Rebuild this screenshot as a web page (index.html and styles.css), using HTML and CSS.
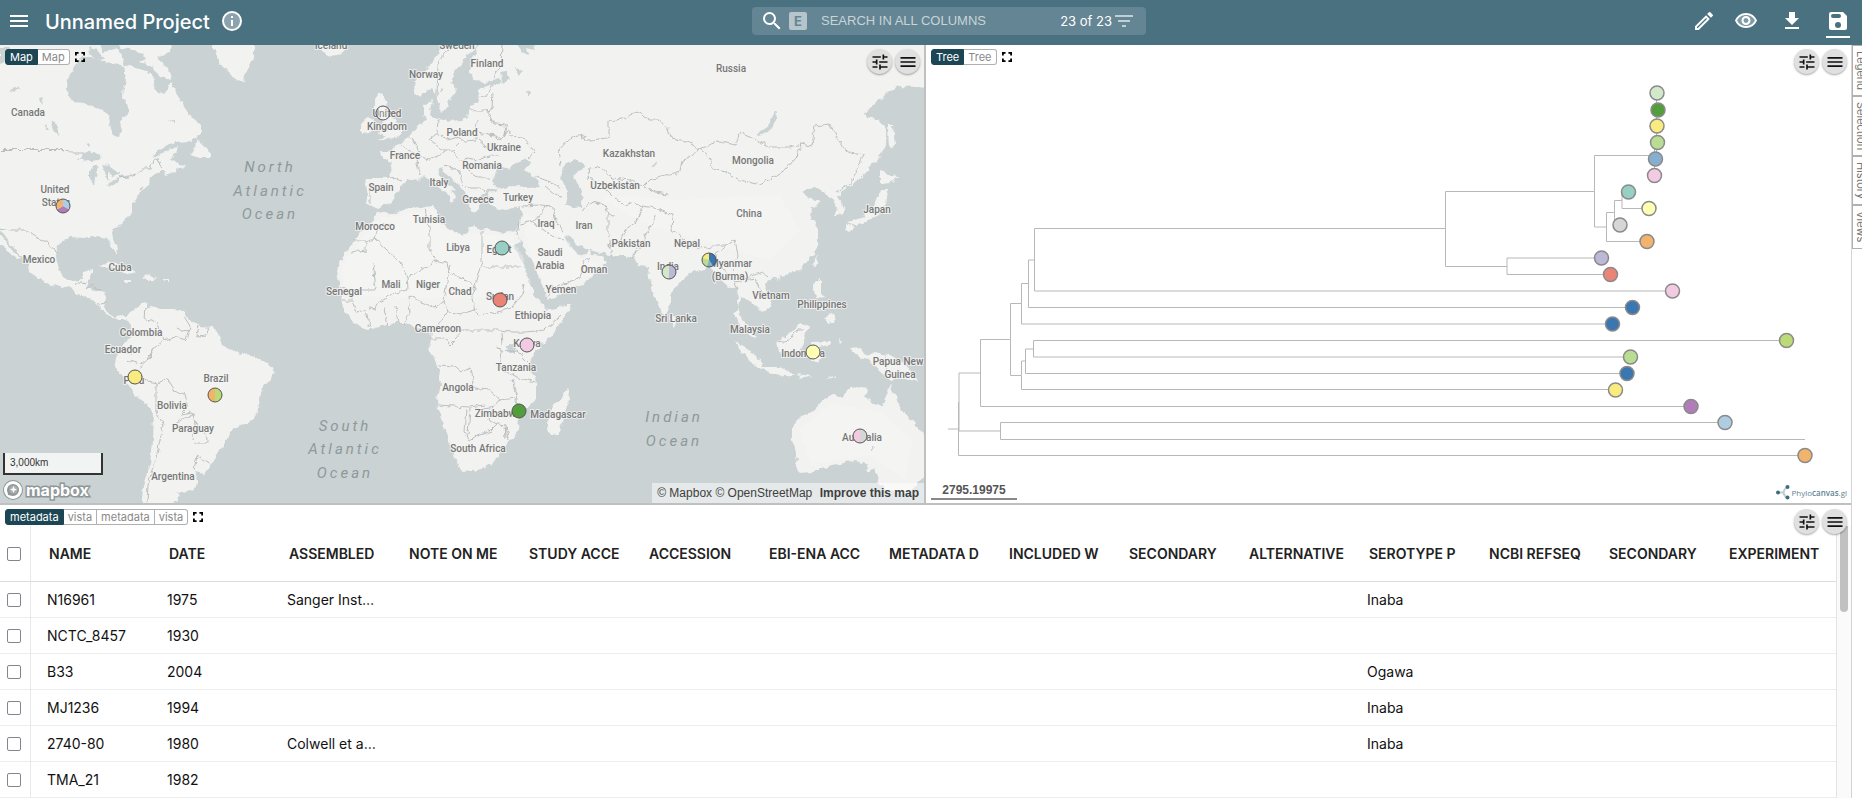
FILE: index.html
```html
<!DOCTYPE html>
<html lang="en">
<head>
<meta charset="utf-8">
<title>Unnamed Project</title>
<link rel="stylesheet" href="styles.css">
</head>
<body>
<svg class="defs" width="0" height="0" aria-hidden="true">
  <symbol id="i-menu" viewBox="0 0 24 24"><path d="M3 18h18v-2H3v2zm0-5h18v-2H3v2zm0-7v2h18V6H3z"/></symbol>
  <symbol id="i-tune" viewBox="0 0 24 24"><path d="M3 17v2h6v-2H3zM3 5v2h10V5H3zm10 16v-2h8v-2h-8v-2h-2v6h2zM7 9v2H3v2h4v2h2V9H7zm14 4v-2H11v2h10zm-6-4h2V7h4V5h-4V3h-2v6z"/></symbol>
  <symbol id="i-full" viewBox="0 0 14 14"><path d="M0 9h2.5v2.500H5V14H0zM0 5h2.500V2.500H5V0H0zM11.500 11.500H9V14h5V9h-2.500zM9 0v2.500h2.500V5H14V0z"/></symbol>
</svg>

<header class="topbar">
  <div class="brand">
    <button class="icon-btn" aria-label="Menu"><svg class="ic24"><use href="#i-menu"/></svg></button>
    <h1 class="title">Unnamed Project</h1>
    <button class="icon-btn" aria-label="Project info"><svg class="ic24" viewBox="0 0 24 24"><circle cx="12" cy="12" r="9" fill="#8ba3ad" stroke="#fff" stroke-width="2"/><path d="M11 7h2v2h-2zM11 11h2v6h-2z"/></svg></button>
  </div>
  <div class="search">
    <svg class="ic24" viewBox="0 0 24 24"><path d="M15.500 14h-.79l-.28-.27A6.471 6.471 0 0 0 16 9.500 6.500 6.500 0 1 0 9.500 16c1.610 0 3.090-.59 4.230-1.570l.27.28v.79l5 4.990L20.490 19l-4.990-5zm-6 0C7.010 14 5 11.990 5 9.500S7.010 5 9.500 5 14 7.010 14 9.500 11.990 14 9.500 14z"/></svg>
    <button class="exact" aria-label="Exact match">E</button>
    <input class="query" type="text" aria-label="Search in all columns" placeholder="SEARCH IN ALL COLUMNS">
    <span class="count">23 of 23</span>
    <button class="icon-btn faded" aria-label="Filters"><svg class="ic24" viewBox="0 0 24 24"><path d="M10 18h4v-2h-4v2zM3 6v2h18V6H3zm3 7h12v-2H6v2z"/></svg></button>
  </div>
  <nav class="actions">
    <button class="icon-btn edit" aria-label="Edit"><svg class="ic24" viewBox="0 0 24 24"><path d="M3 17.250V21h3.750L17.810 9.940l-3.750-3.750L3 17.250zM5.920 19H5v-.92l9.060-9.060.92.92L5.920 19zM20.710 5.630l-2.340-2.340a1 1 0 0 0-1.410 0l-1.830 1.830 3.750 3.750 1.830-1.830a1 1 0 0 0 0-1.410z"/></svg></button>
    <button class="icon-btn" aria-label="View"><svg class="ic24" viewBox="0 0 24 24"><path d="M12 6c3.790 0 7.170 2.130 8.820 5.500C19.170 14.870 15.790 17 12 17s-7.170-2.130-8.820-5.500C4.830 8.130 8.210 6 12 6z" fill="#7f9ba6"/><path d="M12 6c3.790 0 7.170 2.130 8.820 5.500C19.170 14.870 15.790 17 12 17s-7.170-2.130-8.820-5.500C4.830 8.130 8.210 6 12 6m0-2C7 4 2.730 7.110 1 11.500 2.730 15.890 7 19 12 19s9.270-3.110 11-7.500C21.270 7.110 17 4 12 4zm0 5a2.500 2.500 0 0 1 0 5 2.500 2.500 0 0 1 0-5m0-2a4.500 4.500 0 1 0 0 9 4.500 4.500 0 0 0 0-9z"/></svg></button>
    <button class="icon-btn" aria-label="Download"><svg class="ic24" viewBox="0 0 24 24"><path d="M19 9h-4V3H9v6H5l7 7 7-7zM5 18v2h14v-2H5z"/></svg></button>
    <button class="icon-btn current" aria-label="Save"><svg class="ic24" viewBox="0 0 24 24"><path d="M17 3H5a2 2 0 0 0-2 2v14a2 2 0 0 0 2 2h14a2 2 0 0 0 2-2V7l-4-4z"/><rect x="5" y="5" width="10" height="4" rx="2" fill="#49717f"/><circle cx="12" cy="16" r="3" fill="#49717f"/></svg></button>
  </nav>
</header>

<div class="workspace">
<main class="panes">
  <section class="pane map-pane" aria-label="Map">
    <svg class="canvas" viewBox="0 45 924 458" preserveAspectRatio="xMidYMid slice">
      <defs>
        <filter id="rough" x="0" y="0" width="100%" height="100%"><feTurbulence type="fractalNoise" baseFrequency="0.16" numOctaves="2" seed="4"/><feDisplacementMap in="SourceGraphic" scale="6" xChannelSelector="R" yChannelSelector="G"/></filter>
      </defs>
      <rect y="40" width="924" height="470" fill="#cad2d3"/>
      <g filter="url(#rough)">
      <rect y="40" width="924" height="470" fill="#cad2d3"/>
      <g fill="#f2f2f1">
        <path d="M-5 36H96L104 52 118 48 124 66 130 65 140 70 152 74 153 86 160 94 166 92 171 82 176 92 180 100 185 108 193 118 201 125 201 134 190 141 176 142 165 146 156 152 153 158 160 155 172 148 178 147 176 153 172 158 178 164 186 165 180 168 170 173 166 175 165 171 160 171 155 173 150 178 149 184 140 190 138 197 132 204 132 213 125 220 117 226 112 232 113 238 117 248 116 254 111 247 108 238 100 237 92 236 85 238 70 237 62 242 57 248 56 256 57 262 60 272 66 279 74 281 81 280 83 272 92 269 92 274 89 281 86 288 95 290 105 292 106 298 104 306 108 312 115 317 121 315 127 317 126 320 118 320 111 317 105 312 98 305 93 300 84 296 75 293 70 286 62 288 50 284 38 278 30 272 29 266 22 258 14 248 4 234-5 226z"/>
        <path d="M-5 232 4 238 11 249 20 258 16 259 6 249-5 242z"/>
        <path d="M116 36 122 48 134 50 146 57 140 62 152 66 160 76 171 80 168 68 158 58 170 52 171 36z"/>
        <path d="M210 36 219 62 228 72 236 80 243 83 247 70 253 58 255 36z"/>
        <path d="M314 36 320 52 332 57 344 52 348 36z"/>
        <path d="M190 155 196 146 199 138 201 146 209 150 211 158 200 158z"/>
        <path d="M98 266 108 262 122 266 136 272 128 274 116 268z"/><path d="M142 277 150 274 158 279 148 281zM124 280h7v2h-7zM164 279h5v2h-5z"/>
        <path d="M125 317 130 312 138 308 143 303 147 302 145 308 152 306 160 309 175 309 183 310 188 318 200 326 214 327 220 337 222 345 236 352 255 356 268 363 274 370 272 380 262 388 259 405 256 415 250 422 240 426 230 432 226 441 217 455 210 467 205 474 194 472 198 480 197 487 190 491 178 492 179 501 172 503 170 515H140L143 490 150 465 152 440 153 410 146 405 136 396 129 385 122 375 115 365 116 358 119 352 122 345 130 338 131 325z"/>
        <path d="M375 102 378 94 383 93 383 98 388 101 386 107 392 115 395 122 402 127 402 133 398 137 388 139 380 142 378 141 386 136 380 133 382 128 384 122 380 116 375 110zM361 124 368 117 374 119 373 128 370 133 361 134z"/>
        <path d="M445 36 440 52 432 62 424 72 416 80 413 86 415 95 420 98 426 90 431 88 436 98 440 108 441 112 447 108 449 100 456 92 455 86 451 82 454 72 462 64 466 56 476 48 484 36z"/>
        <path d="M484 36 475 55 470 64 470 74 476 81 485 82 499 78 502 82 492 85 484 87 478 92 480 96 478 103 470 106 468 118 462 120 450 121 437 119 432 117 430 110 432 100 424 105 424 113 426 121 418 125 412 133 408 138 401 143 394 147 391 151 380 151 381 156 390 162 392 172 388 178 366 178 365 185 367 196 366 204 372 206 376 209 382 206 392 202 397 193 400 188 406 183 407 179 418 181 424 175 430 180 438 187 446 193 450 199 452 203 456 197 451 191 455 189 447 183 441 178 438 170 442 168 446 175 456 183 463 190 467 199 470 208 475 213 478 207 478 200 484 193 489 192 490 203 495 208 505 210 513 208 521 206 521 213 519 222 516 232 520 240 528 254 535 268 540 280 545 292 546 299 556 297 568 290 582 284 591 277 598 270 607 262 600 256 591 254 590 250 586 254 578 256 573 250 568 243 564 236 567 235 576 244 586 248 593 251 600 253 614 256 628 256 634 258 638 265 648 266 649 278 654 295 661 311 665 318 668 310 671 303 671 292 681 282 689 274 700 270 710 268 718 272 722 282 729 288 737 286 738 300 739 310 742 320 752 330 757 338 752 336 744 330 738 320 735 314 740 303 741 297 748 300 754 304 762 312 770 307 772 300 765 289 768 280 776 277 790 274 800 270 812 256 818 243 818 228 811 218 812 208 822 202 816 200 805 196 804 191 813 188 820 190 825 193 832 198 836 206 835 215 843 216 845 212 842 203 837 197 842 190 855 182 870 168 880 156 886 143 886 130 880 120 867 117 865 112 880 100 890 90 900 86 930 88V36z"/>
        <path d="M516 230 512 231 503 233 490 230 480 229 475 225 470 226 468 232 462 235 450 230 442 222 437 218 437 210 433 206 418 208 404 210 392 214 385 213 378 212 372 222 362 231 355 240 346 252 340 262 337 270 339 284 340 297 341 304 346 312 353 322 362 328 369 330 382 326 395 323 407 323 414 328 426 329 432 330 430 345 428 350 434 358 439 370 441 385 437 400 438 410 445 430 450 445 457 462 462 472 475 471 485 468 495 461 503 450 508 443 513 438 518 431 519 415 527 407 536 400 536 385 535 377 531 370 530 362 537 350 552 335 564 318 572 305 566 305 555 308 545 310 544 304 536 298 533 288 528 280 526 270 520 258 514 246 520 242z"/>
        <path d="M888 125 893 125 895 145 889 149zM880 170 888 175 898 176 892 182 880 183zM880 190 888 190 886 205 878 215 866 221 856 226 848 222 862 218 874 206zM847 223 853 226 850 232 847 230zM813 264 817 255 818 262 815 268zM773 276 780 274 778 281z"/>
        <path d="M813 283 820 280 820 292 826 298 815 297zM824 318 833 312 835 322 828 323zM820 304 826 306 822 312z"/>
        <path d="M734 340 745 347 756 356 763 364 762 370 752 364 742 352zM762 367 780 367 795 375 785 377 766 371zM798 374 812 376 800 379zM825 379 836 375 832 378z"/>
        <path d="M776 341 785 337 794 330 801 322 808 326 804 340 800 350 790 354 778 352zM811 342 830 341 831 344 820 347 822 356 818 363 811 360zM839 338 842 340 840 345z"/>
        <path d="M851 348 860 347 866 356 876 352 890 356 905 364 918 382 905 378 890 380 880 372 872 362 860 358z"/>
        <path d="M671 313 677 320 674 327 670 321z"/>
        <path d="M567 389 570 398 565 412 559 432 552 436 547 430 549 418 552 405 560 400z"/>
        <path d="M791 428 800 418 815 410 822 400 833 394 842 398 850 388 862 387 868 388 864 396 874 404 882 406 887 395 890 384 893 392 898 404 906 415 916 426 930 440 930 470 917 485 908 493 900 493 885 490 878 480 875 468 869 472 865 464 855 460 840 464 825 468 812 472 800 473 795 468 798 460 795 448 791 438z"/>
      </g>
      <g fill="#f8f8f7" opacity=".35">
        <path d="M382 218 434 210 436 222 452 234 512 235 524 262 532 286 520 296 440 298 345 296 342 268 360 240z"/>
        <path d="M522 214 560 230 580 258 600 262 590 275 548 292 530 256z"/><path d="M600 196 680 200 780 195 800 230 770 260 700 240 640 222z"/>
        <path d="M800 430 830 404 880 412 912 440 905 480 870 455 810 464z"/>
      </g>
      <g fill="#cad2d3">
        <path d="M75 65 67 80 66 88 73 102 85 103 100 109 109 115 110 125 113 135 119 137 122 132 120 122 128 113 129 108 123 97 124 88 126 80 124 66 115 64 105 62 92 58 82 58z"/>
        <path d="M88 48 98 50 106 60 96 60 90 56zM0 46 10 46 8 58 0 66z"/>
        <path d="M77 160 85 153 95 152 101 156 100 160 90 161zM92 168 96 165 99 168 95 178 94 185 91 184 90 175zM100 164 108 165 114 170 118 172 114 176 109 174 109 181 106 175zM107 184 115 180 121 178 119 182 110 186zM120 176 130 174 129 178 121 178z"/>
        <path d="M50 122 56 123 60 134 54 132zM46 124 49 130 46 129zM10 90 20 86 20 89 13 92zM39 98 43 97 41 104zM86 144 90 143 89 147zM168 120 174 119 174 122z"/>
        <path d="M494 175 500 165 508 169 516 164 522 160 531 162 525 170 538 180 541 187 528 188 515 185 505 189 496 187 492 182z"/><path d="M484 190 497 189 495 192 486 193z"/>
        <path d="M561 170 568 162 578 160 586 168 578 170 574 176 578 185 583 195 582 207 574 208 566 204 568 195 562 182z"/>
        <path d="M650 168 657 161 655 166zM756 134 768 126 774 112 777 110 776 120 768 132 760 136z"/>
        <path d="M500 73 507 72 510 79 504 83zM515 67 521 71 520 76 516 73zM526 92 531 92 529 96zM515 40 522 52 528 54 526 48 534 50 533 40z"/>
        <path d="M506 346 513 344 514 353 507 353zM513 378 516 388 517 396 514 388zM440 88 443 90 440 93zM436 93 437 97 434 97zM871 446 874 449 871 451z"/>
      </g>
      <g fill="none" stroke="#bcbfbf">
        <path d="M0 149.500H65L70 153 85 153M118 172 121 178 135 174 142 169 150 169 153 160 158 158 162 168M0 228 10 230H25L36 237 46 242 57 252M77 286 80 282 86 283M86 290 92 285 100 290M98 304 106 302"/>
        <path d="M145 306 144 318 158 323 164 340 152 350 150 358 140 364 127 360M164 340 176 337 186 340 190 326 185 318M176 328 182 331 190 330M199 326 197 337 206 336 211 327M150 358 152 352 138 372 148 381 156 383 156 412M156 383 168 379 174 391 185 395 188 407 180 415 178 422 194 414 195 425 192 440M156 412 163 425 158 450 152 470 148 485 147 503M180 415 192 413 196 423 206 435 208 443 195 443M194 470 197 455 211 464M119 352 133 354"/>
        <path d="M437 95 438 65 445 52 456 46M502 46 501 66 494 78M366 186 370 190 370 204M389 178 403 181M401 144 408 150 420 156 417 164 420 175M411 137 415 145 420 153M438 120 437 133 446 139 455 137 466 141 476 140 477 121M437 133 430 139 440 150 453 150 459 144M420 157 430 159 440 155 447 150M453 152 460 160 467 158 475 160M443 165 455 168 460 175 463 186M466 163 472 174 478 178 491 178M463 186 470 188 480 188 483 192M470 168 477 160 493 155 500 157M477 133 495 136 502 139M478 140 490 150M502 139 508 131 514 136 525 140 535 152 526 160M469 109 478 111 487 111 494 124 507 125 505 136 502 139M480 98 489 94 492 86M487 111 492 107 493 93M534 176 545 180 556 184 561 190M545 186 555 194 562 196M522 206 540 205 552 206 556 220 563 232M552 206 545 206 538 218 530 222 520 224M530 222 538 226 555 238 563 240M519 222 517 236"/>
        <path d="M560 165 558 150 567 140 578 135 590 140 608 138 608 122 625 118 637 112 650 120 660 120 673 138 688 142 699 148 690 158 682 160 680 172 665 176 650 180 644 186 655 192 668 194M588 180 590 168 600 167 612 178 630 180 642 186M588 180 589 168M590 178 605 188 615 198 625 205 635 202 642 206 636 222 625 230 622 240 608 246M582 210 592 202 605 205 608 214 615 215M608 214 608 236 612 258M642 206 655 208 672 215 671 230 685 240 700 248 712 246 726 246 735 240 738 256 733 270M655 214 650 228 640 246 632 258M546 299 552 288 568 282 580 278 584 262 590 257M699 148 720 141 735 145 740 133 752 138 770 147 790 147 801 144 797 157 785 170 760 185 740 180 725 172 712 168 710 158 699 148M801 144 812 146 815 126 830 124 838 140 848 152 864 154 858 168 851 182 836 192M726 246 715 254 722 268 735 282 738 290M735 282 745 280 755 278 760 292 768 298M745 280 752 276 762 272 768 277"/>
        <path d="M353 241 366 241 366 250 352 252M366 241 374 238 400 262 407 277 437 261 447 263 450 273 475 285M374 238 380 226 393 224M425 208 430 233 430 250 437 261M373 262 376 290 348 290 340 286M407 277 408 290 392 294 378 302 376 310 368 308M450 263 444 300 435 308 408 296M482 231 482 262M482 267 522 267M475 285 480 267 482 262M475 285 472 300 477 315 495 313 511 308 522 295 524 284M408 296 410 312 404 324M384 308 388 326M395 306 398 324M356 312 366 310 370 328M341 300 352 300 356 312M444 300 447 312 440 322 436 330M447 312 460 315 477 308M440 328 462 330 480 330 500 330 511 332 525 332 545 330 560 316M430 338 444 338 450 345 457 338 462 328M439 365 455 366 462 372 470 368 474 388 488 390 500 400 515 398M438 405 468 407 485 405M466 410 464 432 470 440 478 435 492 430 498 424 506 425 508 440M500 400 495 406 484 408 490 420 498 424M505 425 506 438M497 345 502 352 500 368 520 378 535 382M500 352 516 350 528 362M512 380 516 395 518 405M502 332 503 346M470 408 468 435M776 342 790 340 797 330 804 330M886 356 886 378"/>
      </g>
      </g>
      <g class="ocean">
        <text x="270" y="172">North</text><text x="270" y="196">Atlantic</text><text x="270" y="219">Ocean</text>
        <text x="345" y="431">South</text><text x="345" y="454">Atlantic</text><text x="345" y="478">Ocean</text>
        <text x="674" y="422">Indian</text><text x="674" y="446">Ocean</text>
      </g>
      <g class="place">
        <text x="28" y="116">Canada</text><text x="55" y="193">United</text><text x="56" y="206">States</text><text x="39" y="263">Mexico</text><text x="120" y="271">Cuba</text>
        <text x="331" y="49">Iceland</text><text x="457" y="49">Sweden</text><text x="426" y="78">Norway</text><text x="487" y="67">Finland</text><text x="731" y="72">Russia</text>
        <text x="387" y="117">United</text><text x="387" y="130">Kingdom</text><text x="462" y="136">Poland</text><text x="504" y="151">Ukraine</text><text x="482" y="169">Romania</text>
        <text x="405" y="159">France</text><text x="381" y="191">Spain</text><text x="439" y="186">Italy</text><text x="478" y="203">Greece</text><text x="518" y="201">Turkey</text>
        <text x="375" y="230">Morocco</text><text x="429" y="223">Tunisia</text><text x="458" y="251">Libya</text><text x="499" y="253">Egypt</text><text x="546" y="227">Iraq</text><text x="584" y="229">Iran</text>
        <text x="550" y="256">Saudi</text><text x="550" y="269">Arabia</text><text x="594" y="273">Oman</text><text x="561" y="293">Yemen</text>
        <text x="629" y="157">Kazakhstan</text><text x="615" y="189">Uzbekistan</text><text x="753" y="164">Mongolia</text><text x="749" y="217">China</text><text x="877" y="213">Japan</text>
        <text x="631" y="247">Pakistan</text><text x="687" y="247">Nepal</text><text x="668" y="270">India</text><text x="731" y="267">Myanmar</text><text x="730" y="280">(Burma)</text>
        <text x="771" y="299">Vietnam</text><text x="822" y="308">Philippines</text><text x="676" y="322">Sri Lanka</text><text x="750" y="333">Malaysia</text><text x="803" y="357">Indonesia</text>
        <text x="898" y="365">Papua New</text><text x="900" y="378">Guinea</text><text x="862" y="441">Australia</text>
        <text x="344" y="295">Senegal</text><text x="391" y="288">Mali</text><text x="428" y="288">Niger</text><text x="460" y="295">Chad</text><text x="500" y="300">Sudan</text><text x="533" y="319">Ethiopia</text>
        <text x="438" y="332">Cameroon</text><text x="527" y="347">Kenya</text><text x="516" y="371">Tanzania</text><text x="458" y="391">Angola</text><text x="498" y="417">Zimbabwe</text><text x="558" y="418">Madagascar</text><text x="478" y="452">South Africa</text>
        <text x="141" y="336">Colombia</text><text x="123" y="353">Ecuador</text><text x="134" y="384">Peru</text><text x="216" y="382">Brazil</text><text x="172" y="409">Bolivia</text><text x="193" y="432">Paraguay</text><text x="173" y="480">Argentina</text>
      </g>
      <g class="slices">
        <path fill="#a9cee6" d="M63 206V199A7 7 0 0 1 69 209.500z"/><path fill="#b07db9" d="M63 206 69 209.500A7 7 0 0 1 57 209.500z"/><path fill="#f2b36c" d="M63 206 57 209.500A7 7 0 0 1 63 199z"/>
        <path fill="#f2b36c" d="M215 388a7 7 0 0 0 0 14z"/><path fill="#badb75" d="M215 388a7 7 0 0 1 0 14z"/>
        <path fill="#d1e9c9" d="M669 265a7 7 0 0 0 0 14z"/><path fill="#bdb8d8" d="M669 265a7 7 0 0 1 0 14z"/>
        <path fill="#f2cbe2" d="M860 429a7 7 0 0 0 0 14z"/><path fill="#d6d6d6" d="M860 429a7 7 0 0 1 0 14z"/>
        <circle cx="709" cy="260" r="7" fill="#b9dd92"/><path fill="#3a76af" d="M709 260V253A7 7 0 0 1 713 266z"/><path fill="#86aed0" d="M709 260 713 266A7 7 0 0 1 707 267z"/><path fill="#faeb7f" d="M709 260V253A7 7 0 0 0 702 258z"/>
      </g>
      <g class="pins">
        <circle cx="63" cy="206" r="7" fill="none"/><circle cx="215" cy="395" r="7" fill="none"/><circle cx="669" cy="272" r="7" fill="none"/><circle cx="860" cy="436" r="7" fill="none"/><circle cx="709" cy="260" r="7" fill="none"/>
        <circle cx="383" cy="113" r="7" fill="#fff" fill-opacity=".2"/><circle cx="502" cy="248" r="7" fill="#98cfc4"/><circle cx="500" cy="300" r="7" fill="#ea8476"/><circle cx="527" cy="345" r="7" fill="#f2cbe2"/><circle cx="519" cy="411" r="7" fill="#539e3c"/><circle cx="813" cy="352" r="7" fill="#ffffb4"/><circle cx="135" cy="377" r="7" fill="#faeb7f"/>
      </g>
    </svg>
    <div class="pane-head">
      <div class="tabs"><button class="tab on">Map</button><button class="tab">Map</button></div>
      <button class="expand" aria-label="Full screen"><svg><use href="#i-full"/></svg></button>
      <div class="tools"><button class="round" aria-label="Settings"><svg><use href="#i-tune"/></svg></button><button class="round" aria-label="Pane menu"><svg><use href="#i-menu"/></svg></button></div>
    </div>
    <div class="map-foot">
      <div class="map-left">
        <div class="scale">3,000km</div>
        <a class="logo" href="#mapbox"><svg viewBox="0 0 20 20"><circle cx="10" cy="10" r="8.500" fill="none" stroke="#8f9799" stroke-width="3"/><circle cx="10" cy="10" r="7.500" fill="#8f9799" stroke="#fff" stroke-width="3"/><path d="M5 15C3.800 8.500 6.500 5 11 5c3 0 4.500 2 4.500 4.300C15.500 13.300 11.500 16 5 15z" fill="#8f9799"/><circle cx="10.500" cy="9.500" r="4" fill="#fff" opacity=".25"/><path d="M10.500 6l1 2.500 2.500 1-2.500 1-1 2.500-1-2.500-2.500-1 2.500-1z" fill="#fff"/></svg><span class="logo-word">mapbox</span></a>
      </div>
      <div class="credit"><a href="#m">© Mapbox</a> <a href="#o">© OpenStreetMap</a> <a class="strong" href="#i">Improve this map</a></div>
    </div>
  </section>

  <section class="pane tree-pane" aria-label="Tree">
    <svg class="canvas" viewBox="926 45 925 458" preserveAspectRatio="xMidYMid slice">
      <g class="branches">
        <path d="M948 429H958M958.500 402V455.500H1805M959 431V373H980.500M959 431H1000.500M1000.500 439.500V422.500H1725M1000.500 439.500H1805M980.500 373V339.500H1010.500M980.500 373V406.500H1691M1010.500 339.500V303.500H1021.500M1010.500 339.500V375.500H1021M1021.500 303.500V283.500H1028.500M1021.500 303.500V324H1612M1028.500 283.500V260H1034.500M1028.500 283.500V307.500H1632M1034.500 260V228.500H1445.500M1034.500 260V291H1672M1445.500 228.500V191.500H1594.500M1445.500 228.500V266.500H1507M1507 266V258H1601M1507 266V274.500H1610M1594.500 191.500V155.500H1655M1594.500 191.500V227H1606.500M1606.500 227V212.500H1614.500M1606.500 227V241.500H1647M1614.500 212.500V200.500H1622M1614.500 212.500V225H1620M1622 200.500V192M1622 200.500V208.500H1649M1654.500 175V142M1656.500 155V93M1021.500 375.500V361H1025.500M1021.500 375.500V389.500H1615M1025.500 361V349H1033.500M1025.500 361V373.500H1627M1033.500 349V340.500H1786M1033.500 349V357H1630"/>
      </g>
      <g class="leaves">
        <circle cx="1657" cy="93" r="7" fill="#d1e9c9"/><circle cx="1658" cy="110" r="7" fill="#539e3c"/><circle cx="1657" cy="126" r="7" fill="#faeb7f"/><circle cx="1657.500" cy="142.500" r="7" fill="#b9dd92"/><circle cx="1655.500" cy="159" r="7" fill="#86aed0"/><circle cx="1654.500" cy="175.500" r="7" fill="#f2cbe2"/><circle cx="1628.500" cy="192" r="7" fill="#98cfc4"/><circle cx="1649" cy="208.500" r="7" fill="#ffffb4"/><circle cx="1620" cy="225" r="7" fill="#d6d6d6"/><circle cx="1647" cy="241.500" r="7" fill="#f2b36c"/><circle cx="1601.500" cy="258" r="7" fill="#bdb8d8"/><circle cx="1610.500" cy="274.500" r="7" fill="#ea8476"/><circle cx="1672.500" cy="291" r="7" fill="#f2cbe2"/><circle cx="1632.500" cy="307.500" r="7" fill="#3a76af"/><circle cx="1612.500" cy="324" r="7" fill="#3a76af"/><circle cx="1786.500" cy="340.500" r="7" fill="#badb75"/><circle cx="1630.500" cy="357" r="7" fill="#b9dd92"/><circle cx="1627" cy="373.500" r="7" fill="#3a76af"/><circle cx="1615.500" cy="390" r="7" fill="#faeb7f"/><circle cx="1691" cy="406.500" r="7" fill="#b07db9"/><circle cx="1725" cy="422.500" r="7" fill="#aecde1"/><circle cx="1805" cy="455.500" r="7" fill="#f2b36c"/>
      </g>
    </svg>
    <div class="pane-head">
      <div class="tabs"><button class="tab on">Tree</button><button class="tab">Tree</button></div>
      <button class="expand" aria-label="Full screen"><svg><use href="#i-full"/></svg></button>
      <div class="tools"><button class="round" aria-label="Settings"><svg><use href="#i-tune"/></svg></button><button class="round" aria-label="Pane menu"><svg><use href="#i-menu"/></svg></button></div>
    </div>
    <div class="tree-foot">
      <div class="tree-scale">2795.19975</div>
      <a class="phylo" href="#phylocanvas"><svg viewBox="0 0 15 15"><path d="M2 7.500h5M11.500 2Q8 4 7.500 7.500 8 11 11.500 13" fill="none" stroke="#c3ced3" stroke-width="2"/><circle cx="2" cy="7.500" r="2" fill="#3d6c7c"/><circle cx="11.500" cy="2" r="2" fill="#3d6c7c"/><circle cx="11.500" cy="12.500" r="2" fill="#3d6c7c"/></svg><span>Phylo<b>canvas</b>.gl</span></a>
    </div>
  </section>

  <section class="pane data-pane" aria-label="metadata">
    <div class="pane-head">
      <div class="tabs"><button class="tab on">metadata</button><button class="tab">vista</button><button class="tab">metadata</button><button class="tab">vista</button></div>
      <button class="expand" aria-label="Full screen"><svg><use href="#i-full"/></svg></button>
      <div class="tools"><button class="round" aria-label="Settings"><svg><use href="#i-tune"/></svg></button><button class="round" aria-label="Pane menu"><svg><use href="#i-menu"/></svg></button></div>
    </div>
    <div class="grid-wrap">
      <table class="grid">
        <colgroup><col class="c-pick"><col class="c-data" span="15"><col></colgroup>
        <thead><tr><th class="pick"><input type="checkbox" aria-label="Select all"></th><th>NAME</th><th>DATE</th><th>ASSEMBLED</th><th>NOTE ON ME</th><th>STUDY ACCE</th><th>ACCESSION</th><th>EBI-ENA ACC</th><th>METADATA D</th><th>INCLUDED W</th><th>SECONDARY</th><th>ALTERNATIVE</th><th>SEROTYPE P</th><th>NCBI REFSEQ</th><th>SECONDARY</th><th>EXPERIMENT</th><th class="fill"></th></tr></thead>
        <tbody>
          <tr><td class="pick"><input type="checkbox" aria-label="Select N16961"></td><td>N16961</td><td>1975</td><td>Sanger Institute</td><td></td><td></td><td></td><td></td><td></td><td></td><td></td><td></td><td>Inaba</td><td></td><td></td><td></td><td class="fill"></td></tr>
          <tr><td class="pick"><input type="checkbox" aria-label="Select NCTC_8457"></td><td>NCTC_8457</td><td>1930</td><td></td><td></td><td></td><td></td><td></td><td></td><td></td><td></td><td></td><td></td><td></td><td></td><td></td><td class="fill"></td></tr>
          <tr><td class="pick"><input type="checkbox" aria-label="Select B33"></td><td>B33</td><td>2004</td><td></td><td></td><td></td><td></td><td></td><td></td><td></td><td></td><td></td><td>Ogawa</td><td></td><td></td><td></td><td class="fill"></td></tr>
          <tr><td class="pick"><input type="checkbox" aria-label="Select MJ1236"></td><td>MJ1236</td><td>1994</td><td></td><td></td><td></td><td></td><td></td><td></td><td></td><td></td><td></td><td>Inaba</td><td></td><td></td><td></td><td class="fill"></td></tr>
          <tr><td class="pick"><input type="checkbox" aria-label="Select 2740-80"></td><td>2740-80</td><td>1980</td><td>Colwell et al., 2009</td><td></td><td></td><td></td><td></td><td></td><td></td><td></td><td></td><td>Inaba</td><td></td><td></td><td></td><td class="fill"></td></tr>
          <tr><td class="pick"><input type="checkbox" aria-label="Select TMA_21"></td><td>TMA_21</td><td>1982</td><td></td><td></td><td></td><td></td><td></td><td></td><td></td><td></td><td></td><td></td><td></td><td></td><td></td><td class="fill"></td></tr>
        </tbody>
      </table>
      <div class="track"><div class="thumb"></div></div>
    </div>
  </section>
</main>
<aside class="rail"><button class="side">Legend</button><button class="side">Selection</button><button class="side">History</button><button class="side">Views</button></aside>
</div>
</body>
</html>
```
FILE: styles.css
```css
* { box-sizing: border-box; }
html, body { height: 100%; }
body {
  margin: 0;
  display: flex;
  flex-direction: column;
  overflow: hidden;
  background: #fff;
  color: #222;
  font-family: Inter, "Liberation Sans", sans-serif;
}
button { margin: 0; padding: 0; border: 0; background: none; color: inherit; font: inherit; cursor: pointer; }
a { color: inherit; text-decoration: none; }
svg { display: block; }
.defs { position: absolute; }

/* Top bar */
.topbar {
  flex: none;
  display: grid;
  grid-template-columns: 752fr 394fr 716fr;
  align-items: start;
  height: 45px;
  padding-top: 7px;
  background: #49717f;
  color: #fff;
}
.ic24 { width: 24px; height: 24px; fill: currentColor; flex: none; }
.icon-btn { display: flex; flex: none; }
.brand { display: flex; align-items: center; height: 28px; padding-left: 7px; }
.title { margin: 2px 10px 0 14px; font-size: 20px; line-height: 26px; font-weight: 500; white-space: nowrap; }
.search {
  display: flex;
  align-items: center;
  height: 28px;
  padding: 0 10px 0 8px;
  border-radius: 4px;
  background: #648593;
}
.exact {
  width: 18px;
  height: 18px;
  margin: 0 14px 0 5px;
  flex: none;
  border-radius: 2px;
  background: #b5c5cb;
  color: #648593;
  font-size: 13px;
  line-height: 18px;
  font-weight: 700;
}
.query {
  flex: 1;
  min-width: 0;
  padding: 0;
  border: 0;
  outline: 0;
  background: none;
  color: #fff;
  font: 14px/20px "Liberation Sans", sans-serif;
  font-size: 13px;
}
.query::placeholder { color: #c7d4d9; opacity: 1; }
.count { font-size: 13px; line-height: 20px; white-space: nowrap; }
.faded { opacity: .6; }
.actions { display: flex; justify-content: flex-end; gap: 22px; padding-right: 12px; }
.actions .icon-btn { height: 31px; padding-top: 2px; }
.actions .edit { margin-right: -4px; }
.actions .current { border-bottom: 2px solid #fff; }

/* Workspace */
.workspace { flex: 1; min-height: 0; display: flex; }
.panes {
  flex: 1;
  min-width: 0;
  display: grid;
  grid-template-columns: 926fr 925fr;
  grid-template-rows: 460fr 293fr;
}
.pane { position: relative; min-width: 0; min-height: 0; overflow: hidden; }
.map-pane { border-right: 2px solid #c0c0c0; border-bottom: 2px solid #c0c0c0; }
.tree-pane { border-bottom: 2px solid #c0c0c0; }
.data-pane { grid-column: 1 / -1; }
.canvas { position: absolute; inset: 0; width: 100%; height: 100%; }
.pane-head {
  position: absolute;
  z-index: 2;
  top: 4px;
  left: 5px;
  right: 4px;
  display: flex;
  align-items: flex-start;
}
.tabs { display: flex; }
.tab {
  height: 16px;
  padding: 0 4px;
  border: 1px solid #b0b0b0;
  border-left-width: 0;
  background: #fff;
  color: #888;
  font-size: 11px;
  line-height: 14px;
}
.tab:first-child { border-radius: 3px 0 0 3px; border-left-width: 1px; }
.tab:last-child { border-radius: 0 3px 3px 0; }
.tab.on { border-color: #1c4654; background: #1c4654; color: #fff; }
.expand { margin: 3px 0 0 5px; }
.expand svg { width: 10px; height: 10px; }
.tools { display: flex; gap: 3px; margin-left: auto; }
.round {
  display: flex;
  align-items: center;
  justify-content: center;
  width: 25px;
  height: 25px;
  border-radius: 50%;
  background: #e0e0e0;
  box-shadow: 0 1px 2px rgba(0, 0, 0, .35);
  color: #111;
}
.round svg { width: 20px; height: 20px; fill: currentColor; }

/* Map */
.place { fill: #777; stroke: #f4f4f3; stroke-width: 2px; stroke-opacity: .8; paint-order: stroke; font: 500 10px Roboto, sans-serif; text-anchor: middle; }
.ocean { fill: #8e999b; font: italic 15px Roboto, sans-serif; letter-spacing: 3px; text-anchor: middle; }
.pins circle { stroke: #555; stroke-width: 1; }
.map-foot { position: absolute; inset: auto 0 0 0; display: flex; align-items: flex-end; justify-content: space-between; }
.map-left { padding: 0 0 3px 3px; }
.scale {
  width: 100px;
  height: 22px;
  padding-left: 5px;
  border: 2px solid #333;
  border-top: 0;
  background: rgba(255, 255, 255, .75);
  color: #333;
  font: 10px/20px "Liberation Sans", sans-serif;
}
.logo { display: flex; align-items: center; gap: 3px; height: 20px; margin-top: 5px; }
.logo svg { width: 20px; height: 20px; }
.logo-word {
  color: #fff;
  font: 700 16px/20px Inter, sans-serif;
  -webkit-text-stroke: 3px #8f9799;
  paint-order: stroke;
}
.credit {
  height: 20px;
  padding: 0 5px;
  background: rgba(255, 255, 255, .5);
  color: #404040;
  font: 12px/20px "Liberation Sans", sans-serif;
}
.strong { margin-left: 4px; font-weight: 700; }

/* Tree */
.branches { fill: none; stroke: #b8b8b8; }
.leaves circle { stroke: #8a8a8a; stroke-width: 1.5; }
.tree-foot { position: absolute; inset: auto 4px 3px 5px; display: flex; align-items: flex-end; justify-content: space-between; }
.tree-scale {
  width: 86px;
  border-bottom: 2px solid #888;
  color: #555;
  font: 700 12px/16px "Liberation Sans", sans-serif;
  text-align: center;
}
.phylo { display: flex; align-items: center; color: #5f8391; font: 8px/14px "Open Sans", sans-serif; }
.phylo b { font-weight: 600; }
.phylo svg { width: 15px; height: 15px; }

/* Data grid */
.grid-wrap { display: flex; height: 100%; padding-top: 21px; }
.grid {
  flex: 1;
  width: 0;
  height: max-content;
  table-layout: fixed;
  border-collapse: separate;
  border-spacing: 0;
  font-size: 14px;
  line-height: 20px;
}
.c-pick { width: 31px; }
.c-data { width: 120px; }
.grid th, .grid td { overflow: hidden; white-space: nowrap; text-align: left; border-bottom: 1px solid #ebedef; }
.grid th { height: 56px; padding: 0 16px 0 18px; border-color: #dcdcdc; color: #222; font-weight: 600; text-overflow: clip; }
.grid td { height: 36px; padding: 0 14px 0 16px; color: #111; text-overflow: ellipsis; }
.grid .pick { padding: 0 0 0 7px; border-right: 1px solid #e6e8ea; }
.grid .fill { padding: 0; }
.pick input {
  display: block;
  appearance: none;
  width: 14px;
  height: 14px;
  margin: 0;
  border: 1px solid #85858f;
  border-radius: 2px;
  background: #fff;
}
.track { flex: none; width: 15px; border-left: 1px solid #e4e4e4; background: #fafafa; padding: 0 3px; }
.thumb { width: 8px; height: 86px; border-radius: 0 0 4px 4px; background: #c1c1c1; }

/* Side rail */
.rail { flex: none; width: 11px; display: flex; flex-direction: column; align-items: flex-start; overflow: hidden; border-left: 1px solid #d4d4d4; }
.side {
  width: 18px;
  padding: 5px 0;
  border: 1px solid #b0b0b0;
  background: #fff;
  color: #777;
  font-size: 11px;
  line-height: 16px;
  writing-mode: vertical-rl;
}
```
